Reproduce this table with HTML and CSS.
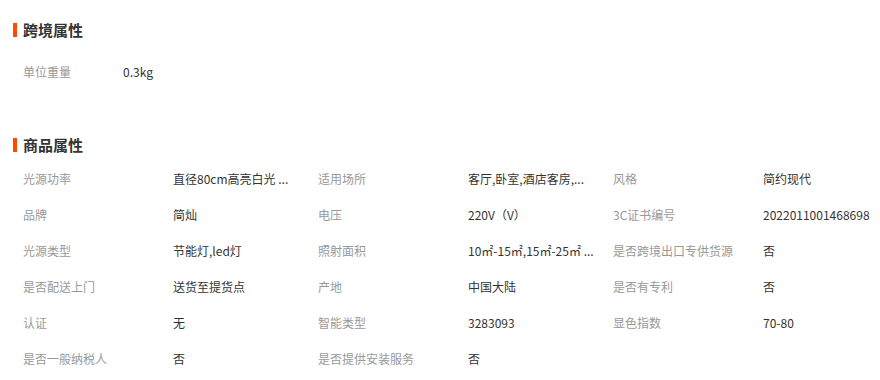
FILE: index.html
```html
<!DOCTYPE html>
<html lang="zh-CN">
<head>
<meta charset="utf-8">
<title>属性</title>
<link rel="stylesheet" href="styles.css">
</head>
<body>
<div class="page">
  <section class="block block-cross">
    <h2 class="title"><span class="bar"></span>跨境属性</h2>
    <div class="grid grid-cross">
      <div class="label">单位重量</div><div class="value">0.3kg</div>
    </div>
  </section>
  <section class="block block-goods">
    <h2 class="title"><span class="bar"></span>商品属性</h2>
    <div class="grid grid-goods">
      <div class="label">光源功率</div><div class="value">直径80cm高亮白光 ...</div>
      <div class="label">适用场所</div><div class="value">客厅,卧室,酒店客房,...</div>
      <div class="label">风格</div><div class="value">简约现代</div>

      <div class="label">品牌</div><div class="value">简灿</div>
      <div class="label">电压</div><div class="value">220V（V）</div>
      <div class="label">3C证书编号</div><div class="value">2022011001468698</div>

      <div class="label">光源类型</div><div class="value">节能灯,led灯</div>
      <div class="label">照射面积</div><div class="value">10㎡-15㎡,15㎡-25㎡ ...</div>
      <div class="label">是否跨境出口专供货源</div><div class="value">否</div>

      <div class="label">是否配送上门</div><div class="value">送货至提货点</div>
      <div class="label">产地</div><div class="value">中国大陆</div>
      <div class="label">是否有专利</div><div class="value">否</div>

      <div class="label">认证</div><div class="value">无</div>
      <div class="label">智能类型</div><div class="value">3283093</div>
      <div class="label">显色指数</div><div class="value">70-80</div>

      <div class="label">是否一般纳税人</div><div class="value">否</div>
      <div class="label">是否提供安装服务</div><div class="value">否</div>
    </div>
  </section>
</div>
</body>
</html>
```

FILE: styles.css
```css
* { box-sizing: border-box; }
html, body { margin: 0; padding: 0; background: #fff; }
body {
  font-family: "Microsoft YaHei", "Noto Sans CJK SC", "Noto Sans", sans-serif;
  font-size: 12px;
  color: #333;
  width: 880px;
  overflow: hidden;
}
.page { padding-left: 13px; }
.title {
  display: flex;
  align-items: center;
  margin: 0;
  height: 20px;
  font-size: 15px;
  font-weight: bold;
  color: #333;
  line-height: 20px;
}
.bar {
  display: inline-block;
  width: 4px;
  height: 14px;
  background: #ff4a00;
  margin-right: 6px;
}
.block-cross { padding-top: 20px; }
.block-cross .grid { margin-top: 14px; }
.block-goods { margin-top: 45px; }
.block-goods .grid { margin-top: 6px; }
.grid {
  display: grid;
  padding-left: 10px;
  grid-auto-rows: 36px;
  align-items: center;
}
.grid-cross { grid-template-columns: 100px 200px; }
.grid-goods { grid-template-columns: 150px 145px 150px 145px 150px 145px; }
.label {
  color: #999;
  line-height: 16px;
  white-space: nowrap;
}
.value {
  color: #333;
  line-height: 16px;
  white-space: nowrap;
}
```
